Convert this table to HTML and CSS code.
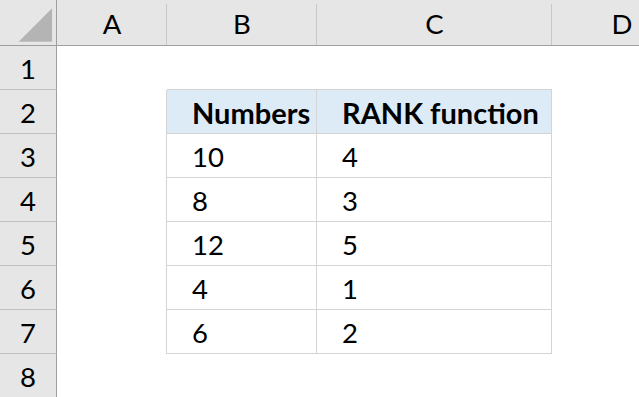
FILE: index.html
```html
<!DOCTYPE html>
<html>
<head>
<meta charset="utf-8">
<link rel="stylesheet" href="styles.css">
</head>
<body>
<div class="sheet">
  <div class="corner"><svg width="57" height="45" viewBox="0 0 57 45"><polygon points="53,8 53,42 19,42" fill="#b4b4b4"/></svg></div>
  <div class="colhead">A</div>
  <div class="colhead">B</div>
  <div class="colhead">C</div>
  <div class="colhead last">D</div>

  <div class="rowhead">1</div>
  <div class="cell"></div>
  <div class="cell top-edge"></div>
  <div class="cell top-edge"></div>
  <div class="cell"></div>

  <div class="rowhead">2</div>
  <div class="cell left-edge"></div>
  <div class="cell data head">Numbers</div>
  <div class="cell data head">RANK function</div>
  <div class="cell"></div>

  <div class="rowhead">3</div>
  <div class="cell left-edge"></div>
  <div class="cell data">10</div>
  <div class="cell data">4</div>
  <div class="cell"></div>

  <div class="rowhead">4</div>
  <div class="cell left-edge"></div>
  <div class="cell data">8</div>
  <div class="cell data">3</div>
  <div class="cell"></div>

  <div class="rowhead">5</div>
  <div class="cell left-edge"></div>
  <div class="cell data">12</div>
  <div class="cell data">5</div>
  <div class="cell"></div>

  <div class="rowhead">6</div>
  <div class="cell left-edge"></div>
  <div class="cell data">4</div>
  <div class="cell data">1</div>
  <div class="cell"></div>

  <div class="rowhead">7</div>
  <div class="cell left-edge"></div>
  <div class="cell data">6</div>
  <div class="cell data">2</div>
  <div class="cell"></div>

  <div class="rowhead">8</div>
  <div class="cell"></div>
  <div class="cell"></div>
  <div class="cell"></div>
  <div class="cell"></div>
</div>
</body>
</html>
```
FILE: styles.css
```css
html, body {
  margin: 0;
  padding: 0;
  background: #ffffff;
  overflow: hidden;
}
.sheet {
  display: grid;
  grid-template-columns: 57px 110px 150px 235px 1fr;
  grid-template-rows: 46px repeat(8, 44px);
  font-family: Lato, "Open Sans", sans-serif;
  font-size: 27.5px;
  color: #000;
}
.corner {
  background: #e6e6e6;
  border-right: 1px solid #9e9e9e;
  border-bottom: 1px solid #9e9e9e;
  box-sizing: border-box;
  display: flex;
}
.corner svg {
  display: block;
}
.colhead {
  box-sizing: border-box;
  border-bottom: 1px solid #a0a0a0;
  background: linear-gradient(#c8c8c8, #c8c8c8) right 4px / 1px calc(100% - 4px) no-repeat, #e6e6e6;
  display: flex;
  align-items: center;
  justify-content: center;
  padding-top: 1px;
}
.colhead.last {
  background: #e6e6e6;
  padding-left: 53px;
}
.rowhead {
  box-sizing: border-box;
  background: #e6e6e6;
  border-right: 1px solid #9e9e9e;
  border-bottom: 1px solid #c0c0c0;
  display: flex;
  align-items: center;
  justify-content: center;
  padding-top: 1px;
}
.cell {
  box-sizing: border-box;
  display: flex;
  align-items: center;
}
.top-edge {
  border-bottom: 1px solid #d4d4d4;
}
.left-edge {
  border-right: 1px solid #d4d4d4;
}
.data {
  border-right: 1px solid #d4d4d4;
  border-bottom: 1px solid #d4d4d4;
  padding-left: 25px;
  padding-top: 1px;
}
.head {
  background: #ddebf7;
  font-weight: bold;
  font-size: 29px;
}
```
